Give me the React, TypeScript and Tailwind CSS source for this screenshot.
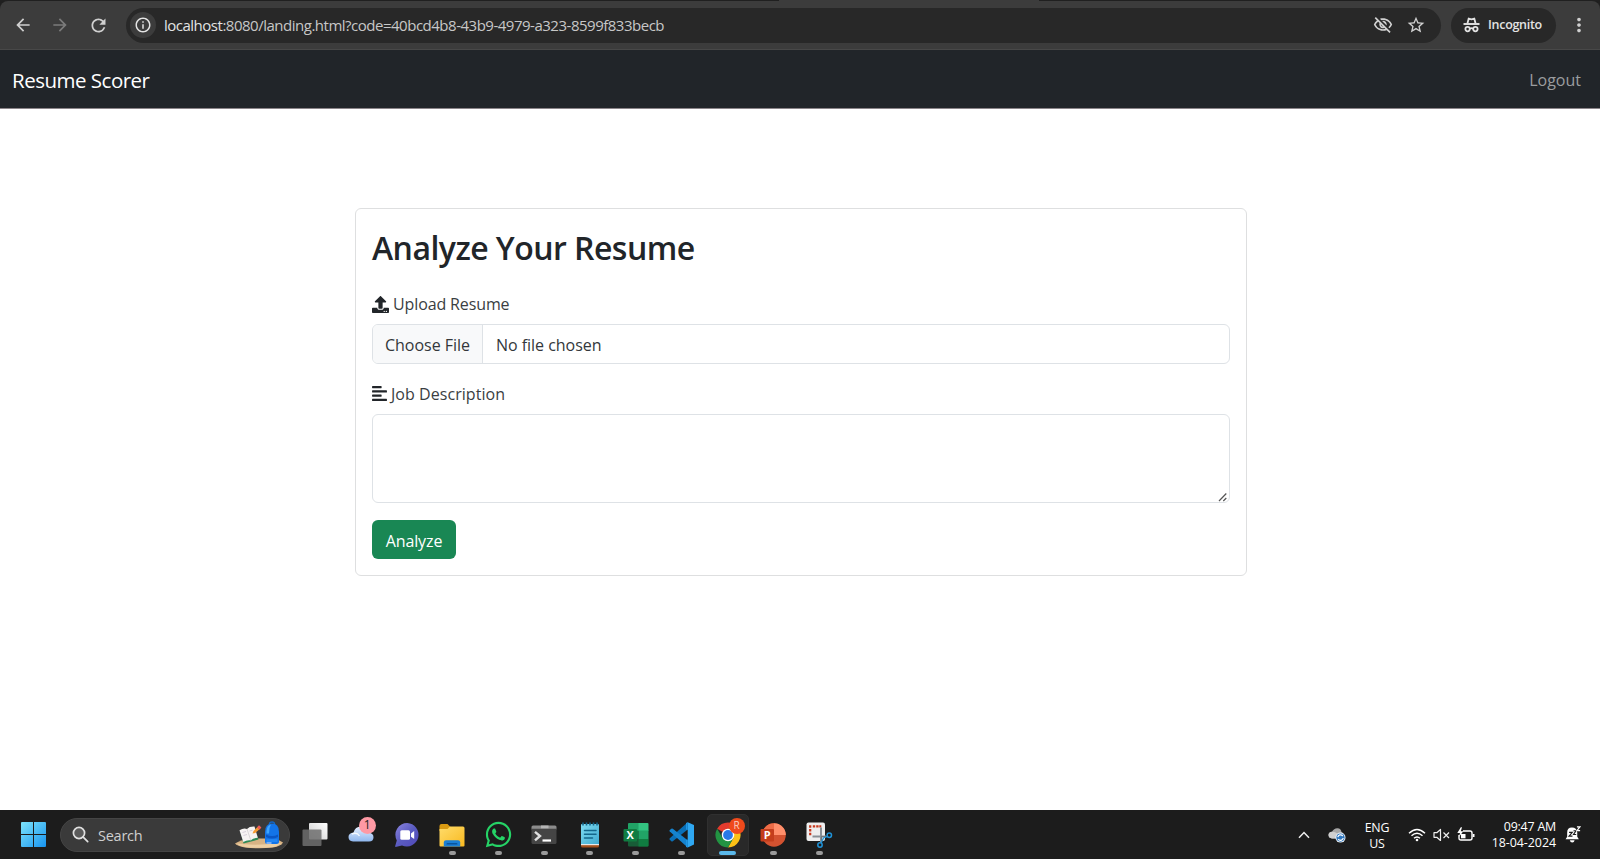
import React from "react";
import { FaUpload, FaAlignLeft, FaWhatsapp } from "react-icons/fa";
import {
  MdArrowBack,
  MdArrowForward,
  MdRefresh,
  MdInfoOutline,
  MdOutlineVisibilityOff,
  MdStarBorder,
  MdMoreVert,
} from "react-icons/md";

function IncognitoIcon() {
  return (
    <svg width="17" height="16" viewBox="0 0 17 16" fill="none" stroke="#e3e3e3" strokeWidth="1.8">
      <path d="M4.500 6.200 5.700 1.500 8.500 2.300 11.300 1.500 12.500 6.200" strokeLinejoin="round" />
      <path d="M0.500 7h16" strokeWidth="1.900" />
      <circle cx="4.600" cy="12.100" r="2.200" />
      <circle cx="12.400" cy="12.100" r="2.200" />
      <path d="M6.800 11.700q1.700-1 3.400 0" />
    </svg>
  );
}

function BrowserBar() {
  return (
    <div className="flex h-[50px] flex-col bg-[#1f1f1f]">
      <div className="flex h-px justify-between">
        <div className="w-[777px] bg-[#202020]" />
        <div className="w-[260px] bg-[#3c3c3c]" />
        <div className="w-[560px] bg-[#202020]" />
      </div>
      <div className="flex h-[49px] items-center rounded-t-lg border-b border-[#484848] bg-[#3c3c3c] pr-[10px] pl-[13px] text-[#d0d0d0]">
        <MdArrowBack className="h-[20px] w-[20px]" />
        <MdArrowForward className="ml-[17px] h-[20px] w-[20px] text-[#7b7b7b]" />
        <MdRefresh className="ml-[18px] h-[21px] w-[21px]" />
        <div className="ml-[17px] flex h-[35px] w-[1316px] items-center rounded-full bg-[#282828] pr-[15px] pl-[4px]">
          <div className="flex h-[26px] w-[26px] items-center justify-center rounded-full bg-[#3c3c3c]">
            <MdInfoOutline className="h-[18px] w-[18px] text-[#e3e3e3]" />
          </div>
          <div className="ml-[8px] flex-1 pt-px text-[15px] tracking-[-0.49px] whitespace-nowrap text-[#c7c7c7]">
            <span className="text-[#e3e3e3]">localhost</span>:8080/landing.html?code=40bcd4b8-43b9-4979-a323-8599f833becb
          </div>
          <MdOutlineVisibilityOff className="h-[20px] w-[20px]" />
          <MdStarBorder className="ml-[13px] h-[20px] w-[20px]" />
        </div>
        <div className="ml-[10px] flex h-[35px] w-[105px] items-center rounded-full bg-[#282828] pl-[12px]">
          <IncognitoIcon />
          <span className="ml-[8px] pt-px text-[12.500px] font-semibold tracking-[-0.3px] text-[#e3e3e3]">Incognito</span>
        </div>
        <MdMoreVert className="ml-[12px] h-[22px] w-[22px] shrink-0" />
      </div>
    </div>
  );
}

function Navbar() {
  return (
    <nav className="flex h-[59px] items-center justify-between border-b border-[#8b8589] bg-[#212529] pt-[2px] pr-[19px] pl-[12px]">
      <span className="text-[20.500px] tracking-[-0.5px] text-white">Resume Scorer</span>
      <span className="text-[16px] text-[#9b9d9f]">Logout</span>
    </nav>
  );
}

function AnalyzeCard() {
  return (
    <section className="mt-[99px] ml-[355px] h-[368px] w-[892px] rounded-[6px] border border-[#dedfe0] px-[16px] pt-[19px] text-[#212529]">
      <h2 className="text-[32px] leading-[40px] font-semibold tracking-[-0.54px]">Analyze Your Resume</h2>
      <label className="mt-[24px] flex h-[24px] items-center text-[16px] tracking-[-0.12px] text-[#3a3e42]">
        <FaUpload className="h-[17px] w-[17px] text-[#212529]" />
        <span className="ml-[4px]">Upload Resume</span>
      </label>
      <div className="mt-[8px] flex h-[40px] items-stretch overflow-hidden rounded-[6px] border border-[#dee2e6] text-[16px] text-[#33373b]">
        <div className="flex w-[110px] items-center border-r border-[#dee2e6] bg-[#f8f9fa] pt-[2px] pl-[12px] tracking-[-0.02px]">
          Choose File
        </div>
        <div className="flex items-center pt-[2px] pl-[13px] tracking-[-0.03px]">No file chosen</div>
      </div>
      <label className="mt-[17px] flex h-[24px] items-center text-[16px] tracking-[0.05px] text-[#3a3e42]">
        <FaAlignLeft className="h-[17px] w-[15px] text-[#212529]" />
        <span className="ml-[4px] pt-px">Job Description</span>
      </label>
      <div className="mt-[9px] flex h-[89px] items-end justify-end rounded-[6px] border border-[#dee2e6] px-px">
        <svg width="10" height="10" viewBox="0 0 10 10" stroke="#555" strokeWidth="1.2">
          <path d="M1 9 8.300 1.500M5.300 9 8.300 6" />
        </svg>
      </div>
      <button className="mt-[17px] flex h-[39px] w-[84px] items-center justify-center rounded-[6px] bg-[#198754] pt-[2px] text-[16px] tracking-[-0.1px] text-white">
        Analyze
      </button>
    </section>
  );
}

function WindowsLogo() {
  return (
    <svg width="25" height="25" viewBox="0 0 25 25">
      <defs>
        <linearGradient id="win" x1="0" y1="0" x2="25" y2="25" gradientUnits="userSpaceOnUse">
          <stop stopColor="#7de4fb" />
          <stop offset="1" stopColor="#1793ef" />
        </linearGradient>
      </defs>
      <path fill="url(#win)" d="M1 0h11v12H0V1q0-1 1-1zM13 0h11q1 0 1 1v11H13zM0 13h12v12H1q-1 0-1-1zM13 13h12v11q0 1-1 1H13z" />
    </svg>
  );
}

function SearchArt() {
  return (
    <svg width="48" height="28" viewBox="0 0 48 28">
      <path d="M0 22.500Q5 19 15 17.500H38Q44 18.500 48 21.500Q46 25 38 26.500Q24 28 10 26.500Q2 25 0 22.500z" fill="#d8b384" />
      <path d="M2 22.500Q20 25 46 22Q43 25.500 37 26.200Q24 27.500 11 26.200Q4 25 2 22.500z" fill="#edcfa3" />
      <path d="M5 9 8.500 22.500 23.500 18.500 22 14 9 17.500z" fill="#2e8b57" />
      <path d="M4.500 9.200Q8.500 6.800 12 8Q14.500 5.300 19.500 5.600L22.800 16.800Q18.500 17 15.800 19.300Q12 18.600 8.300 21z" fill="#f6f3f2" />
      <path d="M12 8 15.800 19.300" stroke="#cfc9cb" strokeWidth=".7" />
      <path d="M7.500 11.500l3.500-1M8.500 14.500l3.500-1M14.500 10l3-.8" stroke="#c9bfd0" strokeWidth=".7" />
      <path d="M17.500 12.600 18.500 10 22.500 6 24.500 8.200 20.200 12z" fill="#f59a32" />
      <path d="M22 6.200 24 4.200 26.400 6.600 24.600 8.800z" fill="#ef5a5a" />
      <path d="M34.500 3Q34.500 1 37 1T39.500 3" stroke="#1268c8" strokeWidth="1.400" fill="none" />
      <path d="M30 11Q30 2.500 37 2.500T44 11V20.500Q44 23 41.500 23H32.500Q30 23 30 20.500z" fill="#1374e8" />
      <path d="M31.500 10Q31.800 4.500 36 3.600Q33.800 7 34 12.500H31.500z" fill="#3fa6ff" />
      <path d="M31 13.500Q37 16.500 43 13.500V16Q37 19 31 16z" fill="#0a56c4" />
      <path d="M31.500 18.200H42.500V21H31.500z" fill="#2387f5" />
      <path d="M31.500 22h5" stroke="#dfe9ff" strokeWidth="1" />
    </svg>
  );
}

function SearchPill() {
  return (
    <div className="ml-[14px] flex h-[34px] w-[230px] items-center rounded-full border border-[#454545] bg-[#3a3a3a] pr-[6px] pl-[11px]">
      <svg width="17" height="17" viewBox="0 0 17 17" fill="#5a5a5a" stroke="#e0e0e0" strokeWidth="1.700">
        <circle cx="7" cy="7" r="5.600" />
        <path d="M11.200 11.200 15.700 15.700" strokeLinecap="round" />
      </svg>
      <span className="ml-[9px] flex-1 pt-[2px] text-[14.500px] tracking-[-0.25px] text-[#cfcfcf]">Search</span>
      <SearchArt />
    </div>
  );
}

function TaskViewIcon() {
  return (
    <svg width="26" height="26" viewBox="0 0 26 26">
      <defs>
        <linearGradient id="tv" x1="0" y1="1" x2="1" y2="0">
          <stop stopColor="#c9c9c9" />
          <stop offset="1" stopColor="#ffffff" />
        </linearGradient>
      </defs>
      <rect x="7" y="1" width="18.500" height="16.500" rx="1" fill="url(#tv)" />
      <rect x=".5" y="7.500" width="19" height="16.500" rx="1" fill="#6e6e6e" fillOpacity=".85" />
    </svg>
  );
}

function WeatherIcon() {
  return (
    <div className="relative h-[26px] w-[26px]">
      <svg width="26" height="26" viewBox="0 0 26 26">
        <defs>
          <linearGradient id="cl" x1="0" y1="0" x2="0" y2="1">
            <stop stopColor="#e6f0ff" />
            <stop offset="1" stopColor="#8fb7ee" />
          </linearGradient>
        </defs>
        <path d="M5 19.500Q.5 19 .5 15T5.500 10.500Q7 4.500 13 4.500T20 10.500Q25.500 11 25.500 15.200T21 19.500z" fill="url(#cl)" />
        <path d="M4 12Q9 10 11.500 14" stroke="#f4f9ff" strokeWidth="1.400" fill="none" />
      </svg>
      <div className="absolute -top-[5px] left-[11px] flex h-[17px] w-[17px] items-center justify-center rounded-full bg-[#fe99a4] text-[12px] text-[#222222]">
        1
      </div>
    </div>
  );
}

function ChatIcon() {
  return (
    <svg width="26" height="26" viewBox="0 0 26 26">
      <defs>
        <linearGradient id="ch" x1="0" y1="0" x2="1" y2="1">
          <stop stopColor="#8d86e0" />
          <stop offset=".5" stopColor="#5a5bc0" />
          <stop offset="1" stopColor="#5048b8" />
        </linearGradient>
      </defs>
      <path d="M13.300 1A11.800 11.800 0 1 1 8 23.600L1.500 25Q1 24.500 1.200 24L2.800 18.400A11.800 11.800 0 0 1 13.300 1z" fill="url(#ch)" />
      <rect x="6.300" y="8.200" width="9.700" height="9.600" rx="1.500" fill="#fff" />
      <path d="M17 11.500 20.200 9v8L17 14.700z" fill="#fff" />
    </svg>
  );
}

function FolderIcon() {
  return (
    <svg width="26" height="26" viewBox="0 0 26 26">
      <defs>
        <linearGradient id="fo" x1="0" y1="0" x2="1" y2="1">
          <stop stopColor="#ffdc6b" />
          <stop offset="1" stopColor="#f9b91f" />
        </linearGradient>
      </defs>
      <path d="M.5 4Q.5 2 2.500 2H8.500L11.500 5V9H.5z" fill="#d99a12" />
      <path d="M.5 7H8.500L11 4.500H24Q25.500 4.500 25.500 6V23.500Q25.500 24.500 24.500 24.500H1.500Q.5 24.500 .5 23.500z" fill="url(#fo)" />
      <path d="M4.800 24.500V20.500Q4.800 18.300 7 18.300H19Q21.200 18.300 21.200 20.500V24.500z" fill="#1b7fd4" />
      <path d="M7.500 22Q7.500 21 8.500 21H17.500Q18.500 21 18.500 22V22.500H7.500z" fill="#0a559c" />
    </svg>
  );
}

function TerminalIcon() {
  return (
    <svg width="26" height="26" viewBox="0 0 26 26">
      <path d="M.5 5Q.5 3.500 2 3.500H24Q25.500 3.500 25.500 5V7.500H.5z" fill="#8c8c8c" />
      <path d="M10 3.500h7.500v3H10z" fill="#b5b5b5" />
      <path d="M.5 6.800h25V20.500Q25.500 22 24 22H2Q.5 22 .5 20.500z" fill="#454545" />
      <path d="M4 9.800 9 14 4 18.300" fill="none" stroke="#e0e0e0" strokeWidth="2.400" />
      <path d="M11.500 18.500h8.500" stroke="#fff" strokeWidth="2.200" />
    </svg>
  );
}

function NotepadIcon() {
  return (
    <svg width="26" height="26" viewBox="0 0 26 26">
      <defs>
        <linearGradient id="np" x1="0" y1="0" x2="1" y2="1">
          <stop stopColor="#7fdcf2" />
          <stop offset="1" stopColor="#3fa9cf" />
        </linearGradient>
      </defs>
      <path d="M4 20h18v4Q22 25.500 20.500 25.500H5.500Q4 25.500 4 24z" fill="#a3501d" />
      <path d="M4 20h18v3.200H4z" fill="#e8e8e8" />
      <path d="M4 3Q4 2 5 2H21Q22 2 22 3V22H4z" fill="url(#np)" />
      <path d="M6 .5v3M9.500 .5v3M13 .5v3M16.500 .5v3M20 .5v3" stroke="#136489" strokeWidth="1.600" />
      <path d="M7.500 8.500h11.500M7.500 12.300h11.500M7.500 16h8" stroke="#14678b" strokeWidth="1.500" strokeLinecap="round" />
    </svg>
  );
}

function ExcelIcon() {
  return (
    <svg width="26" height="26" viewBox="0 0 26 26">
      <path d="M6 1h10v8H5V2Q5 1 6 1z" fill="#21a366" />
      <path d="M15.500 1H24.500Q25.500 1 25.500 2V9H15.500z" fill="#33c481" />
      <path d="M5 8.500h10.500v8.500H5z" fill="#107c41" />
      <path d="M15.500 8.500h10v8.500h-10z" fill="#21a366" />
      <path d="M5 17H25.500v6.500Q25.500 24.500 24.500 24.500H6Q5 24.500 5 23.500z" fill="#185c37" />
      <path d="M15.500 17h10v6.500q0 1-1 1h-9z" fill="#107c41" />
      <rect x=".5" y="7" width="13.500" height="12.500" rx="1" fill="#107c41" />
      <text x="7.200" y="17.200" textAnchor="middle" fill="#fff" fontSize="11" fontWeight="700" fontFamily="Open Sans, sans-serif">X</text>
    </svg>
  );
}

function CodeIcon() {
  return (
    <svg width="26" height="26" viewBox="0 0 26 26">
      <path d="M18.700 .3 25 3V22.500L18.700 25.500z" fill="#2fa8f2" />
      <path d="M18.700 .3V7.600L3.800 19.200Q3 19.700 2.300 19.200L.8 17.800Q0 17 .8 16.200z" fill="#0a70b8" />
      <path d="M18.700 25.500V18.200L3.800 6.700Q3 6.200 2.300 6.700L.8 8Q0 8.800 .8 9.600z" fill="#1583cf" />
      <path d="M18.700 .3 17 .9V7.500L18.700 8zM18.700 25.500 17 24.900V18L18.700 17.500z" fill="#1f96e4" />
    </svg>
  );
}

function ChromeIcon() {
  return (
    <div className="relative h-[26px] w-[26px]">
      <svg width="26" height="26" viewBox="0 0 26 26">
        <path d="M13 13 2.170 6.750A12.500 12.500 0 0 1 23.830 6.750L13 6.750z" fill="#e33b2e" />
        <path d="M13 13V6.750H23.830A12.500 12.500 0 0 1 13 25.500L18.400 16.100z" fill="#fbc116" />
        <path d="M13 13 18.400 16.100 13 25.500A12.500 12.500 0 0 1 2.170 6.750L7.600 16.100z" fill="#229342" />
        <circle cx="13" cy="13" r="6.250" fill="#fff" />
        <circle cx="13" cy="13" r="4.900" fill="#2a78e8" />
      </svg>
      <div className="absolute -top-[4px] left-[14px] flex h-[16px] w-[16px] items-center justify-center rounded-full bg-[#ef4a1c] text-[10px] text-[#f8cfc0]">
        R
      </div>
    </div>
  );
}

function PowerPointIcon() {
  return (
    <svg width="26" height="26" viewBox="0 0 26 26">
      <circle cx="14" cy="13" r="11.800" fill="#d35230" />
      <path d="M14 1.200A11.800 11.800 0 0 1 25.800 13H14z" fill="#ff8f6b" />
      <path d="M14 1.200V13H2.200A11.800 11.800 0 0 1 14 1.200z" fill="#ed6c47" />
      <rect x=".5" y="7" width="13.500" height="12.500" rx="1" fill="#c43e1c" />
      <text x="7.200" y="17.200" textAnchor="middle" fill="#fff" fontSize="11" fontWeight="700" fontFamily="Open Sans, sans-serif">P</text>
    </svg>
  );
}

function SnippingIcon() {
  return (
    <svg width="26" height="26" viewBox="0 0 26 26" fill="none" overflow="visible">
      <rect x=".5" y=".5" width="18.500" height="18.500" rx="2" fill="#eeeeee" />
      <path d="M4.200 3.200v2.500M4.200 7v2.500M4.200 10.800v2.500M6.800 4.300h2.400M10.200 4.300h2.400M13.300 4.300h2" stroke="#c8381d" strokeWidth="2.200" />
      <path d="M15 5.500V20M6.500 14.500H20" stroke="#8a9096" strokeWidth="2" />
      <path d="M15.500 14.500V20.500M15 14.500H21.500" stroke="#6f777e" strokeWidth="1.200" />
      <circle cx="23.300" cy="13.300" r="2.200" stroke="#1f93d8" strokeWidth="1.500" />
      <circle cx="14" cy="23" r="2.200" stroke="#1f93d8" strokeWidth="1.500" />
      <path d="M21.400 14.500 17.500 16 15 21" stroke="#1f93d8" strokeWidth="1.300" />
    </svg>
  );
}

type TaskApp = { name: string; icon: React.ReactNode; state?: "open" | "active" };

const apps: TaskApp[] = [
  { name: "task-view", icon: <TaskViewIcon /> },
  { name: "weather", icon: <WeatherIcon /> },
  { name: "chat", icon: <ChatIcon /> },
  { name: "files", icon: <FolderIcon />, state: "open" },
  { name: "whatsapp", icon: <FaWhatsapp className="h-[29px] w-[29px] text-[#25d366]" />, state: "open" },
  { name: "terminal", icon: <TerminalIcon />, state: "open" },
  { name: "notepad", icon: <NotepadIcon />, state: "open" },
  { name: "excel", icon: <ExcelIcon />, state: "open" },
  { name: "code", icon: <CodeIcon />, state: "open" },
  { name: "chrome", icon: <ChromeIcon />, state: "active" },
  { name: "powerpoint", icon: <PowerPointIcon />, state: "open" },
  { name: "snipping", icon: <SnippingIcon />, state: "open" },
];

function TaskbarApp({ app }: { app: TaskApp }) {
  return (
    <div className="flex w-[45.850px] shrink-0 justify-center">
      <div
        className={`relative flex h-[42px] w-[42px] items-center justify-center rounded-[5px] ${
          app.state === "active" ? "border border-[#303030] bg-[#292929]" : ""
        }`}
      >
        {app.icon}
        {app.state === "open" && <div className="absolute bottom-px h-[4px] w-[7px] rounded-full bg-[#9a9a9a]" />}
        {app.state === "active" && <div className="absolute bottom-0 h-[4px] w-[17px] rounded-full bg-[#5ab8ea]" />}
      </div>
    </div>
  );
}

function Tray() {
  return (
    <div className="ml-auto flex items-center text-[12.400px] leading-[16px] text-white">
      <svg width="12" height="8" viewBox="0 0 12 8" fill="none" stroke="#eee" strokeWidth="1.500">
        <path d="M1 6.800 6 1.500 11 6.800" />
      </svg>
      <svg className="mt-px ml-[18px]" width="18" height="16" viewBox="0 0 18 16">
        <path d="M4 11.500Q.5 11 .5 8T4 4.800Q6 1 9.500 1.200T13.500 5Q16 6 16 8.500V11.500z" fill="#a7a7a7" />
        <path d="M4 11.500Q.5 11 .5 8T4 4.800Q9 5 12 9V11.500z" fill="#cfcfcf" />
        <circle cx="12.500" cy="10.600" r="5" fill="#f2f6fa" />
        <circle cx="12.500" cy="10.600" r="4.100" fill="#2f76bd" />
        <path d="M9.800 10.200A2.800 2.800 0 0 1 14.800 9M15.200 11A2.800 2.800 0 0 1 10.200 12.200" stroke="#fff" strokeWidth="1.300" fill="none" />
      </svg>
      <div className="ml-[18px] w-[26px] pt-[2px] text-center tracking-[-0.2px]">
        <div>ENG</div>
        <div>US</div>
      </div>
      <svg className="ml-[18px]" width="18" height="14" viewBox="0 0 18 14" fill="none" stroke="#fff" strokeWidth="1.400">
        <path d="M1 5.200Q9-2.400 17 5.200M3.500 7.800Q9 2.600 14.500 7.800M6 10.300Q9 7.500 12 10.300" />
        <circle cx="9" cy="12" r="1.300" fill="#fff" stroke="none" />
      </svg>
      <svg className="ml-[7px]" width="18" height="14" viewBox="0 0 18 14" fill="none" stroke="#eee" strokeWidth="1.200">
        <path d="M1 4.700H3.800L7.500 1.500V12.500L3.800 9.300H1z" strokeLinejoin="round" />
        <path d="M10.500 4.500 16 10M16 4.500 10.500 10" />
      </svg>
      <svg className="ml-[6px]" width="18" height="15" viewBox="0 0 18 15" fill="none" stroke="#fff" strokeWidth="1.400">
        <path d="M6 4H13Q15 4 15 6V11Q15 13 13 13H4Q2 13 2 11V8" />
        <path d="M16.600 7v3" strokeWidth="1.800" />
        <path d="M4 7H8.500V11.300H4z" fill="#fff" stroke="none" />
        <path d="M3.800 .2.300 6H3L2 10 6.300 4.300H3.800L5 .2z" fill="#fff" stroke="none" />
      </svg>
      <div className="ml-[16px] w-[65px] text-right whitespace-nowrap">
        <div className="tracking-[-0.200px]">09:47 AM</div>
        <div className="tracking-[-0.040px]">18-04-2024</div>
      </div>
      <svg className="ml-[9px]" width="16" height="17" viewBox="0 0 15 16">
        <path d="M.5 12.500 2 10V6Q2 1.500 6.500 1.500T11.500 6V10L13 12.500z" fill="#fff" />
        <path d="M4.500 13.300H9Q8.700 15.500 6.800 15.500T4.500 13.300z" fill="#fff" />
        <path d="M3.800 6H6.800L3.800 9.500H7M8 4.500H10.300L8 8H10.500" stroke="#1c1c1c" strokeWidth="1.100" fill="none" />
        <path d="M11.200 .8H14L11.200 4.300H14.200" stroke="#fff" strokeWidth="1.100" fill="none" />
      </svg>
    </div>
  );
}

function Taskbar() {
  return (
    <footer className="flex h-[49px] items-center bg-[#1c1c1c] pr-[19px] pl-[21px]">
      <WindowsLogo />
      <SearchPill />
      <div className="ml-[2px] flex">
        {apps.map((app) => (
          <TaskbarApp key={app.name} app={app} />
        ))}
      </div>
      <Tray />
    </footer>
  );
}

export default function App() {
  return (
    <div className="flex h-[859px] w-[1600px] flex-col overflow-hidden bg-white font-['Open_Sans','Noto_Sans',sans-serif]">
      <BrowserBar />
      <Navbar />
      <main className="flex-1">
        <AnalyzeCard />
      </main>
      <Taskbar />
    </div>
  );
}
